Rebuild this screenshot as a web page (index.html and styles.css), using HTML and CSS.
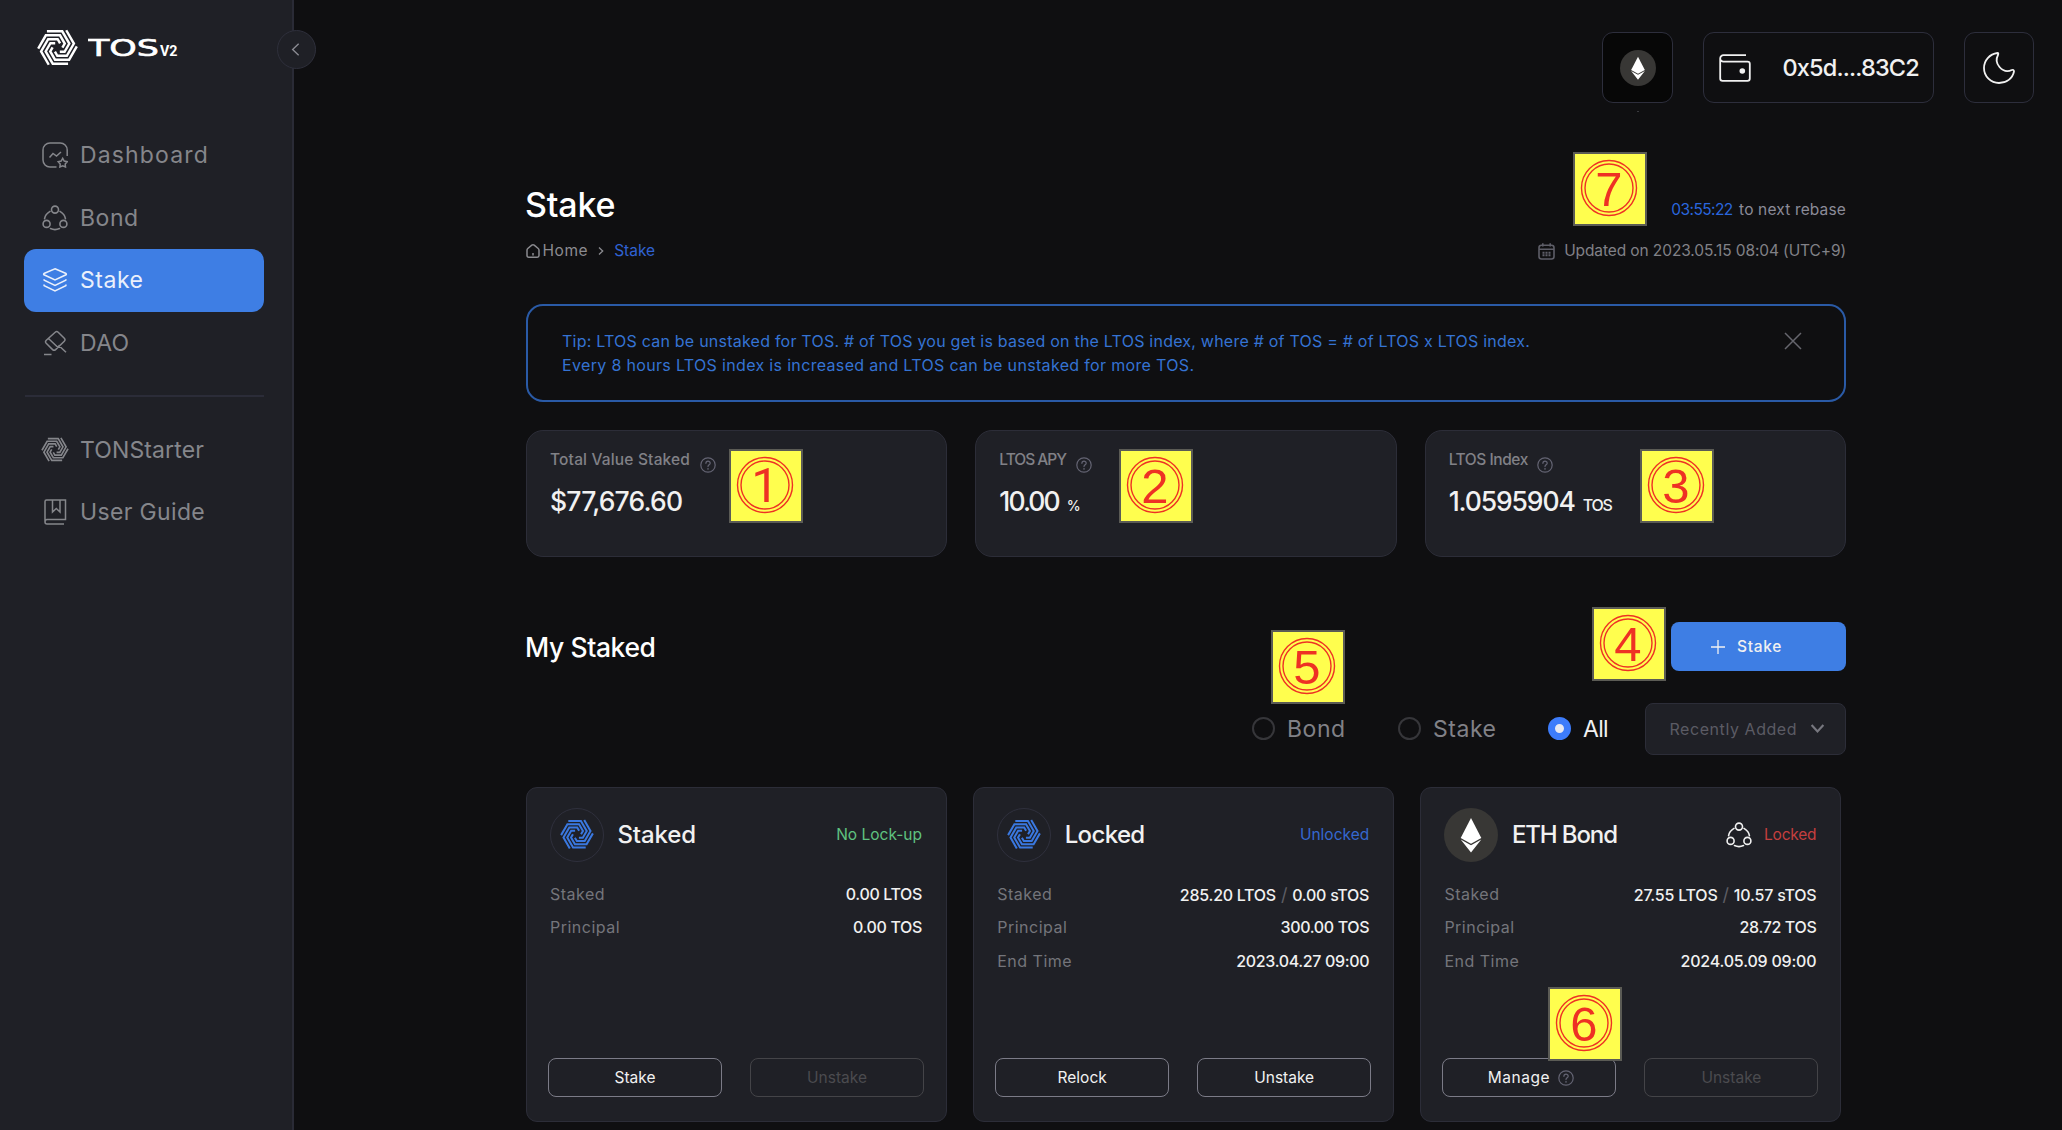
FILE: index.html
```
<!DOCTYPE html>
<html lang="en">
<head>
<meta charset="utf-8">
<title>TOS v2 - Stake</title>
<link rel="stylesheet" href="styles.css">
</head>
<body>
<svg class="sprite" aria-hidden="true">
  <defs>
    <path id="arm" d="M-32 -49H14.4L35.8 -12L21.4 13H7" fill="none" stroke="currentColor" stroke-width="7.4"/>
    <symbol id="pinwheel" viewBox="-62 -56 124 112">
      <use href="#arm"/>
      <use href="#arm" transform="rotate(60)"/>
      <use href="#arm" transform="rotate(120)"/>
      <use href="#arm" transform="rotate(180)"/>
      <use href="#arm" transform="rotate(240)"/>
      <use href="#arm" transform="rotate(300)"/>
    </symbol>
    <symbol id="bond" viewBox="0 0 26 26">
      <g fill="none" stroke="currentColor" stroke-width="1.6" stroke-linecap="round">
        <circle cx="13" cy="4.6" r="3.5"/><circle cx="4.6" cy="18.9" r="3.5"/><circle cx="21.4" cy="18.9" r="3.5"/>
        <path d="M8 6.4C5 8.200 3 10.600 2.600 13.600M18 6.400C21 8.200 23 10.600 23.400 13.600M8.500 23.600C11.500 24.900 14.500 24.900 17.500 23.600"/>
      </g>
    </symbol>
    <symbol id="help" viewBox="0 0 16 16">
      <g fill="none" stroke="currentColor" stroke-width="1.2" stroke-linecap="round">
        <circle cx="8" cy="8" r="7.2"/>
        <path d="M5.900 6.300C5.900 3.400 10.200 3.500 10.200 6.200C10.200 7.800 8 7.900 8 9.600"/>
      </g>
      <circle cx="8" cy="11.900" r=".8" fill="currentColor"/>
    </symbol>
    <symbol id="rings" viewBox="0 0 58 58">
      <g fill="none" stroke="currentColor" stroke-width="1.4"><circle cx="29" cy="29" r="27.500"/><circle cx="29" cy="29" r="24"/></g>
    </symbol>
    <symbol id="eth" viewBox="0 0 54 54">
      <circle cx="27" cy="27" r="27" fill="#383735"/>
      <path d="M27 10L37.300 30L27 35.800L16.700 30Z" fill="#fff"/>
      <path d="M16.700 31.600L27 37.200L37.300 31.600L27 44.500Z" fill="#fff"/>
    </symbol>
  </defs>
</svg>

<div class="app">
  <aside class="sidebar">
    <div class="brand">
      <svg class="brand-mark"><use href="#pinwheel"/></svg>
      <svg class="brand-name" viewBox="0 0 92 36">
        <text class="brand-tos" x="0" y="26" textLength="71" lengthAdjust="spacingAndGlyphs">TOS</text>
        <text class="brand-v2" x="72" y="26" textLength="17.500" lengthAdjust="spacingAndGlyphs">V2</text>
      </svg>
    </div>
    <div class="collapse"><svg viewBox="0 0 10 16"><path d="M8.500 1.500L1.800 8L8.500 14.500"/></svg></div>
    <nav class="nav">
      <a class="nav-item"><svg viewBox="0 0 26 26"><path d="M25.200 14V8A7 7 0 0 0 18.200 1H8A7 7 0 0 0 1 8V18A7 7 0 0 0 8 25H14.500M7.500 15.500L11 11.500L14.500 14L19 10M20.700 16.300L22.200 19L25.200 19.700L23.200 22L23.500 25L20.700 23.900L17.900 25L18.200 22L16.200 19.700L19.200 19Z"/></svg><span class="ls-dashboard">Dashboard</span></a>
      <a class="nav-item"><svg><use href="#bond"/></svg><span class="ls-p5">Bond</span></a>
      <a class="nav-item active"><svg viewBox="0 0 26 26"><path d="M13 1.800L24 6.500C24.500 6.900 24.500 7.400 24 7.800L13 13L2 7.800C1.500 7.400 1.500 6.900 2 6.500ZM1.800 12.300L2.200 13.200L13 18.500L23.800 13.200L24.200 12.300M1.800 17.500L2.200 18.800L13 24L23.800 18.800L24.200 17.500"/></svg><span class="ls-p5">Stake</span></a>
      <a class="nav-item"><svg viewBox="0 0 26 26"><path d="M13.200 2.200Q14.700 .8 16.200 2.200L22.300 8.300Q23.700 9.800 22.300 11.200L13.600 19.600Q12 21 10.600 19.600L4.200 13.300Q2.800 11.800 4.300 10.300ZM6.500 8.500L16 17.500M16.500 15.200L24 22.200M2 24.600H9.500"/></svg><span class="ls-p3">DAO</span></a>
    </nav>
    <hr class="nav-rule">
    <nav class="nav nav-links">
      <a class="nav-item"><svg class="wide"><use href="#pinwheel"/></svg><span class="ls-p1">TONStarter</span></a>
      <a class="nav-item"><svg viewBox="0 0 26 26"><path d="M3 23V2.500Q3 1 4.500 1H23.500V20.500H5Q3 20.500 3 23Q3 25 5 25H22M10.500 1V13L14.300 9.500L18 13V1"/></svg><span class="ls-p3">User Guide</span></a>
    </nav>
  </aside>

  <main class="main">
    <header class="topbar">
      <div class="box network"><svg><use href="#eth"/></svg><i class="speck"></i></div>
      <div class="box wallet">
        <svg viewBox="0 0 32 28"><path d="M27 1.200H4.500A3.300 3.300 0 0 0 1.200 4.500V24.500Q1.200 26.800 3.500 26.800H28.500Q30.800 26.800 30.800 24.500V9.800Q30.800 7.600 28.500 7.600H4.500A3.200 3.200 0 0 1 1.200 4.500"/><circle cx="23.300" cy="17" r="2.800"/></svg>
        <span>0x5d....83C2</span>
      </div>
      <div class="box theme"><svg viewBox="0 0 32 32"><path d="M14.500 1C6.500 2 1 8.500 1 16C1 24.500 7.800 31 16 31C23.500 31 29.500 26.500 31 19.500C31 18 30 17.500 28.800 18C24 20.300 19.500 18.500 16.500 15C13.500 11.500 12.800 7 15 3C15.500 1.800 15.500 1 14.500 1Z"/></svg></div>
    </header>

    <div class="content">
      <section class="page-head">
        <div>
          <h1>Stake</h1>
          <div class="crumbs">
            <svg class="home" viewBox="0 0 14 14"><path d="M1 6.200Q1 5.200 1.800 4.500L5.800 1.200Q7 .4 8.200 1.200L12.200 4.500Q13 5.200 13 6.200V11.500Q13 13.200 11.300 13.200H2.700Q1 13.200 1 11.500ZM7 9V11.500"/></svg>
            <span class="ls-p5">Home</span>
            <svg class="sep" viewBox="0 0 6 10"><path d="M1 1.500L4.700 5L1 8.500"/></svg>
            <span class="here">Stake</span>
          </div>
        </div>
        <div class="head-right">
          <p class="rebase"><b>03:55:22</b><span>to next rebase</span></p>
          <p class="updated"><svg viewBox="0 0 17 17"><path d="M3.500 2.200H13.500Q16 2.200 16 4.700V13.500Q16 16 13.500 16H3.500Q1 16 1 13.500V4.700Q1 2.200 3.500 2.200ZM1 6.300H16M4.800 .2V3.500M12.200 .2V3.500"/><path class="days" d="M4.500 9.800H13M4.500 12.300H13"/></svg>Updated on 2023.05.15 08:04 (UTC+9)</p>
        </div>
      </section>

      <section class="tip">
        <p><span class="tip-a">Tip: LTOS can be unstaked for TOS. # of TOS you get is based on the LTOS index, where # of TOS = # of LTOS x LTOS index.</span><br><span class="tip-b">Every 8 hours LTOS index is increased and LTOS can be unstaked for more TOS.</span></p>
        <svg viewBox="0 0 18 18"><path d="M1 1L17 17M17 1L1 17"/></svg>
      </section>

      <section class="metrics">
        <article class="metric">
          <h3><span class="ls-p2">Total Value Staked</span><svg><use href="#help"/></svg></h3>
          <p class="ls-m8">$77,676.60</p>
        </article>
        <article class="metric">
          <h3><span class="ls-m10">LTOS APY</span><svg><use href="#help"/></svg></h3>
          <p><span class="ls-m19">10.00</span><small class="pct">%</small></p>
        </article>
        <article class="metric">
          <h3><span class="ls-m4">LTOS Index</span><svg><use href="#help"/></svg></h3>
          <p><span class="ls-m11">1.0595904</span><small>TOS</small></p>
        </article>
      </section>

      <section class="staked-head">
        <h2>My Staked</h2>
        <button class="primary"><svg viewBox="0 0 14 14"><path d="M7 0V14M0 7H14"/></svg>Stake</button>
      </section>

      <section class="filters">
        <label class="f-bond"><i></i><span class="ls-p5">Bond</span></label>
        <label class="f-stake"><i></i><span class="ls-p5">Stake</span></label>
        <label class="f-all on"><i></i><span>All</span></label>
        <div class="select">Recently Added<svg viewBox="0 0 14 10"><path d="M1.500 1.800L7 7.800L12.500 1.800"/></svg></div>
      </section>

      <section class="cards">
        <article class="card">
          <header><span class="coin"><svg><use href="#pinwheel"/></svg></span><h3>Staked</h3><em class="green">No Lock-up</em></header>
          <dl>
            <div><dt>Staked</dt><dd>0.00 LTOS</dd></div>
            <div><dt>Principal</dt><dd>0.00 TOS</dd></div>
          </dl>
          <footer><button>Stake</button><button class="off">Unstake</button></footer>
        </article>
        <article class="card">
          <header><span class="coin"><svg><use href="#pinwheel"/></svg></span><h3 class="ls-m6">Locked</h3><em class="blue">Unlocked</em></header>
          <dl>
            <div><dt>Staked</dt><dd class="ls-m3">285.20 LTOS<i>/</i>0.00 sTOS</dd></div>
            <div><dt>Principal</dt><dd>300.00 TOS</dd></div>
            <div><dt>End Time</dt><dd>2023.04.27 09:00</dd></div>
          </dl>
          <footer><button>Relock</button><button>Unstake</button></footer>
        </article>
        <article class="card">
          <header><svg class="coin-eth"><use href="#eth"/></svg><h3 class="ls-m11">ETH Bond</h3><svg class="bond-icon"><use href="#bond"/></svg><em class="red">Locked</em></header>
          <dl>
            <div><dt>Staked</dt><dd class="ls-m2">27.55 LTOS<i>/</i>10.57 sTOS</dd></div>
            <div><dt>Principal</dt><dd>28.72 TOS</dd></div>
            <div><dt>End Time</dt><dd class="ls-m2">2024.05.09 09:00</dd></div>
          </dl>
          <footer><button class="manage"><span class="ls-p5">Manage</span><svg><use href="#help"/></svg></button><button class="off">Unstake</button></footer>
        </article>
      </section>
    </div>
  </main>
</div>

<div class="note note-1"><svg><use href="#rings"/></svg><span>1</span></div>
<div class="note note-2"><svg><use href="#rings"/></svg><span>2</span></div>
<div class="note note-3"><svg><use href="#rings"/></svg><span>3</span></div>
<div class="note note-4"><svg><use href="#rings"/></svg><span>4</span></div>
<div class="note note-5"><svg><use href="#rings"/></svg><span>5</span></div>
<div class="note note-6"><svg><use href="#rings"/></svg><span>6</span></div>
<div class="note note-7"><svg><use href="#rings"/></svg><span>7</span></div>
</body>
</html>
```
FILE: styles.css
```
* { box-sizing: border-box; margin: 0; padding: 0; }
body {
  background: #0f0f11;
  color: #f1f1f1;
  font: 400 15.5px/24px Inter, "Open Sans", sans-serif;
  height: 1130px;
  overflow: hidden;
  position: relative;
}
svg { display: block; flex: none; fill: none; stroke: currentColor; }
svg use { stroke: none; }
.sprite { position: absolute; width: 0; height: 0; }
button { font: inherit; color: inherit; }
i, em { font-style: normal; }
h1, h2, h3 { font-weight: 500; }

.app { display: flex; height: 1130px; }

/* Sidebar */
.sidebar {
  position: relative;
  width: 294px;
  flex: none;
  background: #1f2026;
  border-right: 2px solid #2a2b36;
  padding: 29px 28px 0 24px;
}
.brand { display: flex; align-items: center; gap: 10px; height: 37px; padding-left: 12.500px; color: #fff; }
.brand-mark { width: 41px; height: 37px; }
.brand-name { width: 92px; height: 36px; }
.brand-name text { fill: #fff; stroke: none; }
.brand-tos { font: 400 23px "DejaVu Sans", sans-serif; stroke: #fff !important; stroke-width: .6px; }
.brand-v2 { font: 700 15.5px Roboto, sans-serif; }
.collapse {
  position: absolute;
  left: 277px;
  top: 30px;
  width: 39px;
  height: 39px;
  border: 1.500px solid #2e2f3b;
  border-radius: 50%;
  background: #1f2026;
  color: #8b8b93;
  display: grid;
  place-items: center;
}
.collapse svg { width: 9px; height: 15px; margin-right: 2px; stroke-width: 1.5; }
.nav { padding-top: 57.5px; }
.nav-item {
  display: flex;
  align-items: center;
  gap: 12px;
  height: 62.700px;
  padding-left: 18px;
  border-radius: 12px;
  color: #85868b;
  font-size: 23px;
}
.nav-item svg { width: 26px; height: 26px; stroke-width: 1.5; }
.nav-item svg.wide { width: 28px; height: 25px; margin: 0 -1px; }
.nav-item.active { background: #3e7ee4; color: #eaf0fb; }
.nav-rule { border: 0; height: 2px; margin: 21px 0 0 1px; background: #2b2c38; }
.nav-links { padding-top: 21px; }

/* Top bar */
.main { flex: 1; }
.topbar { display: flex; justify-content: flex-end; gap: 30px; padding: 32px 28px 0 0; }
.box {
  height: 71px;
  border: 1.500px solid #2d2e3c;
  border-radius: 11px;
  display: flex;
  align-items: center;
  justify-content: center;
}
.network { width: 70.500px; background: #070707; position: relative; }
.network svg { width: 36px; height: 36px; margin-left: 1px; }
.speck { position: absolute; left: 34px; top: 78px; width: 2px; height: 1px; background: #3a3a3f; }
.wallet { width: 231px; justify-content: flex-start; padding-left: 15px; gap: 32px; font-size: 23.500px; font-weight: 500; letter-spacing: -.85px; }
.wallet svg { width: 32px; height: 28px; stroke-width: 1.8; }
.wallet circle { fill: currentColor; stroke: none; }
.theme { width: 70.500px; }
.theme svg { width: 32px; height: 32px; stroke-width: 1.800; }

/* Page heading */
.content { width: 1320px; margin: 79px 0 0 232px; }
.page-head { display: flex; justify-content: space-between; }
h1 { font-size: 34px; line-height: 46px; margin-left: -1px; letter-spacing: -.2px; color: #fff; }
.crumbs { display: flex; align-items: center; height: 24px; margin: 11px 0 0 -.5px; color: #8b8b90; }
.home { width: 14px; height: 14px; margin-right: 3px; stroke-width: 1.5; }
.sep { width: 6px; height: 10px; margin: 0 10px 0 10px; stroke-width: 1.3; }
.here { color: #2f62d3; }
.head-right { text-align: right; padding-top: 16px; }
.rebase { display: flex; justify-content: flex-end; gap: 6.500px; color: #8b8b98; letter-spacing: .15px; }
.rebase b { font-weight: 400; color: #2a66dd; letter-spacing: -.6px; }
.updated { display: flex; align-items: center; justify-content: flex-end; gap: 9px; margin-top: 17px; color: #818187; letter-spacing: -.1px; }
.updated svg { width: 17px; height: 17px; color: #5e5e68; stroke-width: 1.6; }
.days { stroke-width: 2; stroke-dasharray: 2 1; }

.tip {
  display: flex;
  justify-content: space-between;
  height: 98px;
  margin-top: 40.500px;
  padding: 23px 42px 0 34px;
  border: 2px solid #2a5aa6;
  border-radius: 17px;
  color: #3573d3;
  font-size: 16px;
  line-height: 24.300px;
}
.tip-a { letter-spacing: .225px; }
.tip-b { letter-spacing: .335px; }
.tip svg { width: 18px; height: 18px; margin-top: 3px; color: #66666e; stroke-width: 1.5; }

/* Metrics */
.metrics { display: grid; grid-template-columns: repeat(3, 1fr); gap: 28px; margin-top: 28.500px; }
.metric { height: 127px; padding: 17px 23px; background: #1f2026; border: 1.500px solid #2c2d38; border-radius: 17px; }
.metric h3 { display: flex; gap: 9.500px; font-size: 15.500px; line-height: 24px; color: #818187; }
.metric svg { width: 16px; height: 16px; margin-top: 9px; color: #646473; }
.metric p { font-size: 26.500px; font-weight: 500; line-height: 36px; margin-top: 10px; }
.metric small { font-size: 16px; margin-left: 8px; letter-spacing: -1.200px; }
.metric small.pct { font-size: 14px; }

/* Staked list heading */
.staked-head { display: flex; justify-content: space-between; align-items: center; height: 49px; margin-top: 65px; }
h2 { font-size: 26.500px; margin-left: -1px; letter-spacing: -.4px; color: #fff; }
.primary {
  display: flex;
  align-items: center;
  gap: 12px;
  width: 175px;
  height: 49px;
  padding-left: 40px;
  border: 0;
  border-radius: 8px;
  background: #3e7ee4;
  font-weight: 500;
  letter-spacing: .7px;
}
.primary svg { width: 14px; height: 14px; stroke-width: 1.3; }
.filters { display: flex; align-items: center; justify-content: flex-end; margin-top: 31.500px; }
.filters label { display: flex; align-items: center; gap: 12px; font-size: 23px; color: #818187; }
.filters label i { width: 23px; height: 23px; border: 2px solid #36363a; border-radius: 50%; }
.f-bond { width: 146px; }
.f-stake { width: 150px; }
.f-all { width: 97px; letter-spacing: -.7px; }
.filters .on { color: #f1f1f1; }
.filters .on i { border: 7px solid #3d7cfb; background: #e8e9f2; }
.select {
  display: flex;
  align-items: center;
  gap: 13px;
  width: 201px;
  height: 52px;
  padding-left: 23.500px;
  background: #1f2026;
  border: 1.500px solid #2c2d38;
  border-radius: 8px;
  color: #5b5b64;
  font-size: 16px;
  letter-spacing: .56px;
}
.select svg { width: 15px; height: 11px; color: #77777f; stroke-width: 2; }

/* Position cards */
.cards { display: grid; grid-template-columns: repeat(3, 420.500px); gap: 26.700px; margin-top: 32px; }
.card { display: flex; flex-direction: column; height: 335px; padding: 20px 21.500px 23.500px 21px; background: #1f2026; border: 1.500px solid #2c2d38; border-radius: 11px; }
.card header { display: flex; align-items: center; height: 54px; padding: 0 2px; }
.coin { display: grid; place-items: center; width: 54px; height: 54px; border: 1.500px solid #2f303d; border-radius: 50%; color: #3a78e0; }
.coin svg { width: 34px; height: 30.500px; }
.coin-eth { width: 54px; height: 54px; }
.card h3 { font-size: 24px; flex: 1; margin-left: 13.500px; letter-spacing: -.15px; }
.green { color: #5fc280; }
.blue { color: #3568cf; }
.red { color: #c43f3f; letter-spacing: -.2px; }
.bond-icon { width: 26px; height: 26px; margin-right: 12px; }
dl { flex: 1; padding: 16px 2px 0; font-size: 16px; }
dl div { display: flex; justify-content: space-between; height: 33.700px; line-height: 33.700px; }
dt { color: #74757b; letter-spacing: .5px; }
dd { font-weight: 500; letter-spacing: -.35px; }
dd i { margin: 0 5px; font-size: 18px; font-weight: 400; color: #5d5d64; }
.card footer { display: grid; grid-template-columns: 1fr 1fr; gap: 28px; }
.card button { display: flex; align-items: center; justify-content: center; gap: 8px; height: 39px; background: none; border: 1.500px solid #7b7b87; border-radius: 8px; }
.card button.off { color: #4b4b4f; border-color: #444448; }
.card button.manage { padding-left: 3px; }
.card button svg { width: 16px; height: 16px; color: #646473; }

/* Tracking adjustments */
.ls-dashboard { letter-spacing: 1.15px; }
.ls-p5 { letter-spacing: .55px; }
.ls-p3 { letter-spacing: .35px; }
.ls-p2 { letter-spacing: .17px; }
.ls-p1 { letter-spacing: .12px; }
dd.ls-m2 { letter-spacing: -.2px; }
dd.ls-m3 { letter-spacing: -.25px; }
.ls-m4 { letter-spacing: -.43px; }
.card .ls-m6 { letter-spacing: -.65px; }
.ls-m8 { letter-spacing: -.8px; }
.ls-m10 { letter-spacing: -1px; }
.ls-m11, .card .ls-m11 { letter-spacing: -1.12px; }
.ls-m19 { letter-spacing: -1.9px; }

/* Numbered callouts laid over the page */
.note {
  position: absolute;
  width: 74px;
  height: 74px;
  border: 2px solid #5b5b55;
  background: #fffe4e;
  color: #ee3124;
}
.note svg { position: absolute; left: 5px; top: 5px; width: 58px; height: 58px; }
.note span {
  position: absolute;
  left: 5px;
  top: 5px;
  width: 58px;
  font: 400 49px/60px "Liberation Sans", Arial, sans-serif;
  text-align: center;
}
.note-1 { left: 729px; top: 449px; }
.note-1 span { font-family: Roboto, sans-serif; }
.note-2 { left: 1119px; top: 449px; }
.note-3 { left: 1640px; top: 449px; }
.note-4 { left: 1592px; top: 607px; }
.note-5 { left: 1271px; top: 630px; }
.note-6 { left: 1548px; top: 987px; }
.note-7 { left: 1573px; top: 151.500px; }
```
